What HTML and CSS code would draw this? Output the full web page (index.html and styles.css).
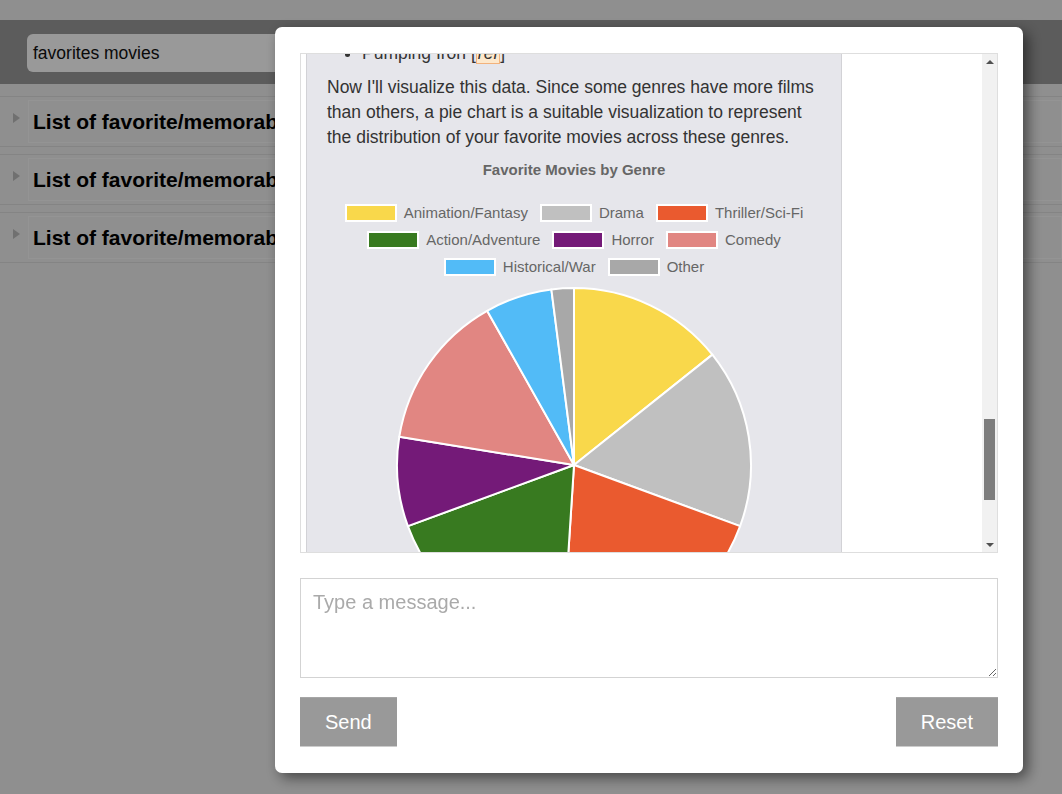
FILE: index.html
```html
<!DOCTYPE html>
<html lang="en">
<head>
<meta charset="utf-8">
<title>Favorites movies</title>
<link rel="stylesheet" href="styles.css">
</head>
<body>
<div class="page">
  <header class="searchbar">
    <div class="search">favorites movies</div>
  </header>
  <div class="list">
    <div class="row"><span class="caret"></span><div class="row-box">List of favorite/memorable movies by genre</div></div>
    <div class="row"><span class="caret"></span><div class="row-box">List of favorite/memorable movies of all time</div></div>
    <div class="row"><span class="caret"></span><div class="row-box">List of favorite/memorable movies to rewatch</div></div>
  </div>
</div>

<div class="overlay"></div>

<div class="modal">
  <div class="chat">
    <div class="chat-scroll">
      <div class="msg">
        <ul class="msg-list">
          <li>Pumping Iron [<span class="ref">ref</span>]</li>
        </ul>
        <p class="msg-text">Now I'll visualize this data. Since some genres have more films than others, a pie chart is a suitable visualization to represent the distribution of your favorite movies across these genres.</p>
        <div class="chart">
          <div class="chart-title">Favorite Movies by Genre</div>
          <div class="legend">
            <div class="legend-row">
              <span class="legend-item"><span class="swatch c-anim"></span>Animation/Fantasy</span>
              <span class="legend-item"><span class="swatch c-drama"></span>Drama</span>
              <span class="legend-item"><span class="swatch c-thriller"></span>Thriller/Sci-Fi</span>
            </div>
            <div class="legend-row">
              <span class="legend-item"><span class="swatch c-action"></span>Action/Adventure</span>
              <span class="legend-item"><span class="swatch c-horror"></span>Horror</span>
              <span class="legend-item"><span class="swatch c-comedy"></span>Comedy</span>
            </div>
            <div class="legend-row">
              <span class="legend-item"><span class="swatch c-hist"></span>Historical/War</span>
              <span class="legend-item"><span class="swatch c-other"></span>Other</span>
            </div>
          </div>
          <svg class="pie" width="494" height="370" viewBox="0 0 494 370" xmlns="http://www.w3.org/2000/svg">
            <g stroke="#ffffff" stroke-width="2" stroke-linejoin="round">
              <path fill="#f9d84b" d="M247,185 L247,8 A177,177 0 0 1 385.38,74.64 Z"/>
              <path fill="#c0c0c0" d="M247,185 L385.38,74.64 A177,177 0 0 1 413.11,246.13 Z"/>
              <path fill="#ea5a2f" d="M247,185 L413.11,246.13 A177,177 0 0 1 235.66,361.64 Z"/>
              <path fill="#387a20" d="M247,185 L235.66,361.64 A177,177 0 0 1 80.89,246.13 Z"/>
              <path fill="#741a78" d="M247,185 L80.89,246.13 A177,177 0 0 1 72.27,156.75 Z"/>
              <path fill="#e18682" d="M247,185 L72.27,156.75 A177,177 0 0 1 160.14,30.78 Z"/>
              <path fill="#52bbf7" d="M247,185 L160.14,30.78 A177,177 0 0 1 224.37,9.45 Z"/>
              <path fill="#a8a8a8" d="M247,185 L224.37,9.45 A177,177 0 0 1 247,8 Z"/>
            </g>
          </svg>
        </div>
      </div>
    </div>
    <div class="scrollbar">
      <div class="sb-btn"><span class="arrow-up"></span></div>
      <div class="sb-track"><div class="sb-thumb"></div></div>
      <div class="sb-btn"><span class="arrow-down"></span></div>
    </div>
  </div>
  <textarea class="composer" placeholder="Type a message..."></textarea>
  <div class="actions">
    <button class="btn">Send</button>
    <button class="btn">Reset</button>
  </div>
</div>
</body>
</html>
```

FILE: styles.css
```css
* { box-sizing: border-box; }

html, body {
  margin: 0;
  padding: 0;
  background: #eeeeee;
  font-family: "Liberation Sans", Arial, sans-serif;
  color: #000;
}

.page {
  padding-top: 20px;
}

.searchbar {
  background: #999999;
  height: 64px;
  padding: 14px 27px;
}

.search {
  width: 880px;
  height: 38px;
  background: #ffffff;
  border-radius: 6px;
  padding: 0 6px;
  font-size: 17.5px;
  line-height: 38px;
  color: #111;
}

.list {
  margin-top: 12px;
  display: flex;
  flex-direction: column;
  gap: 7px;
}

.row {
  display: flex;
  align-items: center;
  border-top: 1px solid #dddddd;
  border-bottom: 1px solid #dddddd;
  padding: 3px 0;
}

.caret {
  width: 0;
  height: 0;
  margin-left: 13px;
  margin-right: 8px;
  margin-bottom: 7px;
  border-left: 7px solid #bbbbbb;
  border-top: 5px solid transparent;
  border-bottom: 5px solid transparent;
}

.row-box {
  flex: 1;
  height: 43px;
  border: 1px solid #f7f7f7;
  padding-left: 4px;
  font-size: 21px;
  font-weight: bold;
  line-height: 41px;
  white-space: nowrap;
  overflow: hidden;
}

.overlay {
  position: fixed;
  inset: 0;
  background: rgba(0, 0, 0, 0.4);
}

.modal {
  position: fixed;
  left: 275px;
  top: 27px;
  width: 748px;
  background: #ffffff;
  border-radius: 7px;
  padding: 26px 25px 26px 25px;
  box-shadow: 5px 5px 14px rgba(0, 0, 0, 0.5);
  display: flex;
  flex-direction: column;
}

.chat {
  height: 500px;
  border: 1px solid #dedede;
  display: flex;
  overflow: hidden;
}

.chat-scroll {
  flex: 1;
  overflow: hidden;
  background: #ffffff;
}

.msg {
  width: 536px;
  margin-left: 5px;
  margin-top: -13px;
  background: #e6e6eb;
  border: 1px solid #d2d2d6;
  border-top: none;
  padding: 0 20px 40px 20px;
  color: #333333;
  font-size: 17.5px;
  line-height: 25px;
}

.msg-list {
  margin: 0 0 9px 0;
  padding-left: 35px;
}

.ref {
  background: #fde8cc;
  border: 1px solid #f2b27c;
  padding: 0 1px;
  font-style: italic;
}

.msg-text {
  margin: 0;
}

.chart {
  margin-top: 10px;
  width: 494px;
}

.chart-title {
  text-align: center;
  font-size: 15px;
  font-weight: bold;
  line-height: 20px;
  color: #666666;
}

.legend {
  margin-top: 19px;
  display: flex;
  flex-direction: column;
}

.legend-row {
  display: flex;
  justify-content: center;
  gap: 12px;
  height: 27px;
  align-items: center;
}

.legend-item {
  display: flex;
  align-items: center;
  gap: 7px;
  font-size: 15px;
  line-height: 18px;
  color: #666666;
  white-space: nowrap;
}

.swatch {
  width: 52px;
  height: 18px;
  border: 2px solid #ffffff;
}

.c-anim { background: #f9d84b; }
.c-drama { background: #c0c0c0; }
.c-thriller { background: #ea5a2f; }
.c-action { background: #387a20; }
.c-horror { background: #741a78; }
.c-comedy { background: #e18682; }
.c-hist { background: #52bbf7; }
.c-other { background: #a8a8a8; }

.pie {
  display: block;
}

.scrollbar {
  width: 15px;
  background: #f1f1f1;
  display: flex;
  flex-direction: column;
}

.sb-btn {
  height: 15px;
  display: flex;
  align-items: center;
  justify-content: center;
}

.arrow-up {
  width: 0;
  height: 0;
  border-left: 4px solid transparent;
  border-right: 4px solid transparent;
  border-bottom: 4px solid #505050;
}

.arrow-down {
  width: 0;
  height: 0;
  border-left: 4px solid transparent;
  border-right: 4px solid transparent;
  border-top: 4px solid #505050;
}

.sb-track {
  flex: 1;
}

.sb-thumb {
  margin-top: 350px;
  margin-left: 2px;
  width: 11px;
  height: 81px;
  background: #7d7d7d;
}

.composer {
  display: block;
  width: 100%;
  height: 100px;
  margin-top: 25px;
  border: 1px solid #d3d3d3;
  padding: 12px 12px;
  font-family: "Liberation Sans", Arial, sans-serif;
  font-size: 20px;
  color: #333;
  resize: vertical;
  outline: none;
}

.composer::placeholder {
  color: #aaaaaa;
}

.actions {
  margin-top: 19px;
  display: flex;
  justify-content: space-between;
}

.btn {
  background: #999999;
  color: #ffffff;
  border: none;
  border-top: 1px solid #a6a6a6;
  border-bottom: 1px solid #cccccc;
  font-family: "Liberation Sans", Arial, sans-serif;
  font-size: 20px;
  line-height: 23px;
  padding: 12px 25px;
  height: 50px;
}
```
